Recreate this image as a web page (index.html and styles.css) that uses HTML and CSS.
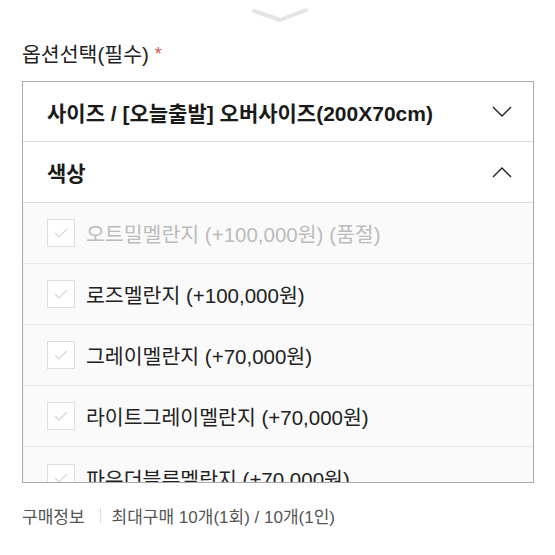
FILE: index.html
```html
<!DOCTYPE html>
<html lang="ko">

<head>
    <meta charset="UTF-8">
    <meta name="viewport" content="width=device-width, initial-scale=1.0">
    <title>옵션선택</title>
    <link rel="stylesheet" href="styles.css">
</head>

<body>
    <div class="handle">
        <svg width="60" height="20" viewBox="0 0 60 20">
            <polyline points="4,6 30,15 56,5" fill="none" stroke="#e4e4e4" stroke-width="4" stroke-linecap="round" stroke-linejoin="round"/>
        </svg>
    </div>

    <div class="page">
        <h2 class="label">옵션선택(필수)<span class="req">*</span></h2>

        <div class="select">
            <div class="row head">
                <span>사이즈 / [오늘출발] 오버사이즈(200X70cm)</span>
                <svg class="arrow" width="20" height="11" viewBox="0 0 20 11">
                    <polyline points="1,1 10,10 19,1" fill="none" stroke="#222" stroke-width="1.4"/>
                </svg>
            </div>
            <div class="row head">
                <span>색상</span>
                <svg class="arrow" width="20" height="11" viewBox="0 0 20 11">
                    <polyline points="1,10 10,1 19,10" fill="none" stroke="#222" stroke-width="1.4"/>
                </svg>
            </div>
            <div class="list">
                <div class="row option soldout">
                    <span class="check"><svg width="16" height="12" viewBox="0 0 16 12"><polyline points="2,6 6,10 14,2" fill="none" stroke="#d6d6d6" stroke-width="1.2"/></svg></span>
                    <span>오트밀멜란지 (+100,000원) (품절)</span>
                </div>
                <div class="row option">
                    <span class="check"><svg width="16" height="12" viewBox="0 0 16 12"><polyline points="2,6 6,10 14,2" fill="none" stroke="#d6d6d6" stroke-width="1.2"/></svg></span>
                    <span>로즈멜란지 (+100,000원)</span>
                </div>
                <div class="row option">
                    <span class="check"><svg width="16" height="12" viewBox="0 0 16 12"><polyline points="2,6 6,10 14,2" fill="none" stroke="#d6d6d6" stroke-width="1.2"/></svg></span>
                    <span>그레이멜란지 (+70,000원)</span>
                </div>
                <div class="row option">
                    <span class="check"><svg width="16" height="12" viewBox="0 0 16 12"><polyline points="2,6 6,10 14,2" fill="none" stroke="#d6d6d6" stroke-width="1.2"/></svg></span>
                    <span>라이트그레이멜란지 (+70,000원)</span>
                </div>
                <div class="row option">
                    <span class="check"><svg width="16" height="12" viewBox="0 0 16 12"><polyline points="2,6 6,10 14,2" fill="none" stroke="#d6d6d6" stroke-width="1.2"/></svg></span>
                    <span>파우더블루멜란지 (+70,000원)</span>
                </div>
            </div>
        </div>

        <p class="info">구매정보<span class="bar"></span>최대구매 10개(1회) / 10개(1인)</p>
    </div>
</body>

</html>
```

FILE: styles.css
```css
*{
    box-sizing: border-box;
}
body{
    margin:0;
    background:#fff;
    font-family:"Liberation Sans", "Noto Sans CJK KR", sans-serif;
    color:#222;
}
.handle{
    height:30px;
    display:flex;
    justify-content:center;
    padding-top:5px;
    padding-left:4px;
}
.page{
    padding:0 22px;
}
.label{
    display:flex;
    align-items:center;
    height:28px;
    margin:9px 0 14px;
    font-size:20.5px;
    font-weight:400;
    color:#222;
}
.req{
    color:#d9534f;
    font-size:18px;
    margin-left:6px;
    margin-top:2px;
}
.select{
    width:512px;
    border:1px solid #ababab;
    background:#fff;
}
.row{
    display:flex;
    align-items:center;
    height:61px;
    padding:0 21px 0 24px;
    border-bottom:1px solid #dcdcdc;
}
.head{
    height:60px;
    justify-content:space-between;
    font-size:21px;
    font-weight:700;
    color:#1a1a1a;
    background:#fff;
}
.head + .head{
    height:61px;
}
.head .arrow{
    flex-shrink:0;
}
.list{
    height:279px;
    overflow:hidden;
}
.option{
    background:#fafafa;
    font-size:20.5px;
    color:#222;
    border-bottom:1px solid #e6e6e6;
}
.option:last-child{
    border-bottom:none;
}
.check{
    width:28px;
    height:28px;
    margin-right:11px;
    border:1px solid #dedede;
    background:#fff;
    display:flex;
    align-items:center;
    justify-content:center;
}
.soldout{
    color:#bcbcbc;
}
.info{
    margin:20px 0 0;
    font-size:17px;
    color:#555;
    display:flex;
    align-items:center;
}
.bar{
    display:inline-block;
    width:1px;
    height:15px;
    background:#dcdcdc;
    margin:0 11px 0 15px;
}
```
